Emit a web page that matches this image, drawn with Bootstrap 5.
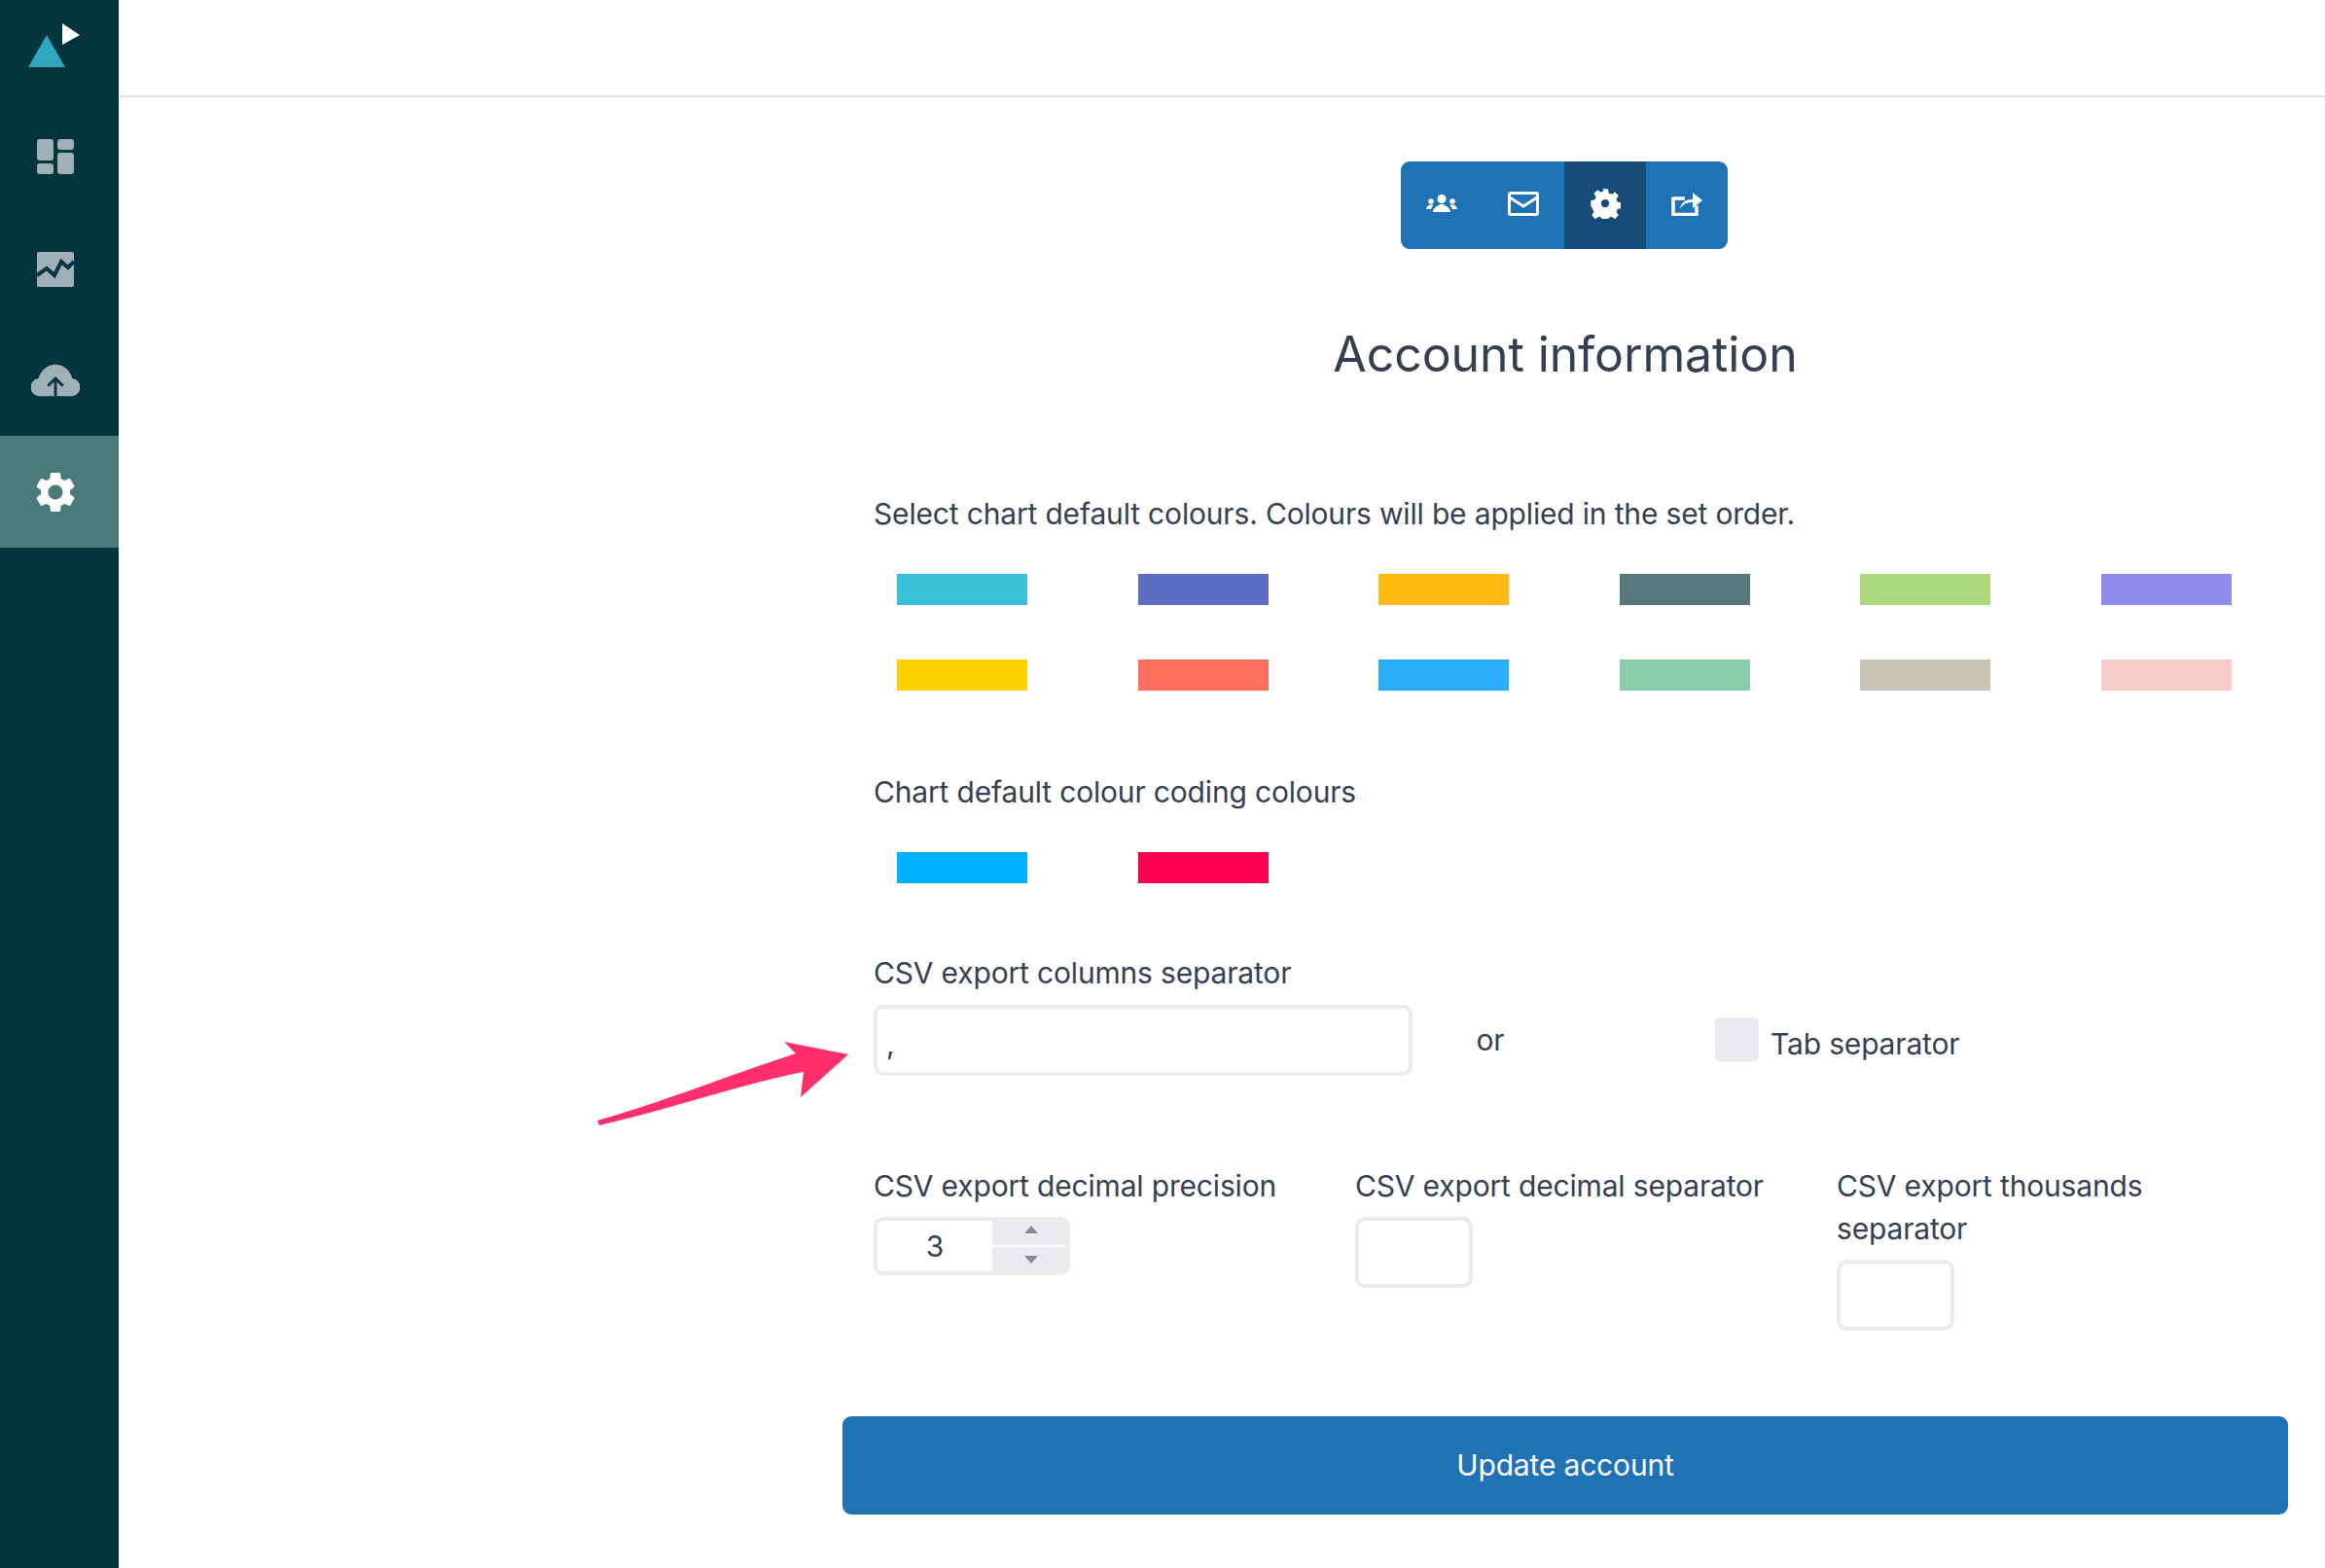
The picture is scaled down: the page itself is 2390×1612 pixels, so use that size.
<!DOCTYPE html>
<html lang="en"><head><meta charset="utf-8"><title>Account information</title>
<link href="https://cdn.jsdelivr.net/npm/bootstrap@5.3.0/dist/css/bootstrap.min.css" rel="stylesheet">
<style>
html,body{height:100%}
body{font-family:Inter,"Liberation Sans",sans-serif;color:#343f52;font-size:30px;background:#fff;letter-spacing:-.17px}
.app-shell{height:1612px;overflow:hidden;position:relative}
.side-rail{width:122px;flex:none;background:linear-gradient(180deg,#04353f,#04343d)}
.rail-logo{height:102px}
.rail-item{height:114px;padding-right:8px}
.rail-first{height:118px}
.rail-item.on{background:#4a7a7a;height:115px}
.top-strip{height:100px;border-bottom:2px solid #e4e6e6}
.form-wrap{width:1486px;margin-left:744px}
.tab-bar{margin-top:66px;width:336px;height:90px;border-radius:9px;overflow:hidden;background:#1f72b6;position:relative;left:-1px}
.tab-item{width:84px;padding-bottom:4px}
.tab-item.on{background:#174b78}
.page-title{font-size:50px;font-weight:400;line-height:60px;margin:78px 0 0;letter-spacing:-.1px}
.field-zone{padding-left:32px;padding-right:0}
.field-cap{line-height:44px;margin:0;display:block}
.cap-first{margin-top:112px}
.sw-grid{display:grid;grid-template-columns:repeat(6,134px);justify-content:space-between;width:1372px;margin-left:24px;margin-top:40px;row-gap:56px}
.sw-box{display:block;height:32px}
.fld{border:4px solid #ebebeb;border-radius:10px;height:73px;box-shadow:none;color:#343f52;font-size:30px;padding:6px 9px 0}
.fld-mini{width:121px}
.spin-box{width:202px;height:60px;border:4px solid #ebebeb;border-radius:10px;overflow:hidden}
.spin-val{width:118px;text-align:center;line-height:52px}
.spin-btns{flex:1;margin-right:-4px;margin-top:-4px;margin-bottom:-4px;gap:2px}
.spin-btns>span{flex:1;background:#e9ebee;padding-bottom:3px}
.tab-check{width:45px;height:45px;border-radius:5px;background:#e9ebee;margin-right:12px;margin-top:-2px}
.tab-txt{position:relative;top:4px}
.or-word{width:160px}
.tab-wrap{margin-left:151px}
.cap-gap{margin-bottom:10px}
.save-btn{background:#1f72b6;border:0;border-radius:9px;height:101px;font-size:30px;width:100%;color:#fff;letter-spacing:-.17px}
.save-btn:hover{background:#1f72b6;color:#fff}
.pink-arrow{position:absolute;left:610px;top:1062px}
</style></head><body>
<div class="app-shell d-flex">
<nav class="side-rail d-flex flex-column">
 <div class="rail-logo"><svg width="122" height="102" viewBox="0 0 122 102"><path d="M48 36 L67 69 L29 69Z" fill="#2fa9bd"/><path d="M64 24 L82 36 L64 46Z" fill="#fff"/></svg></div>
 <div class="rail-item rail-first d-flex align-items-center justify-content-center"><svg width="38" height="36" viewBox="0 0 38 36" fill="#9fb1b6"><rect x="0" y="0" width="17" height="22" rx="3"/><rect x="0" y="25" width="17" height="11" rx="3"/><rect x="21" y="0" width="17" height="11" rx="3"/><rect x="21" y="14" width="17" height="22" rx="3"/></svg></div>
 <div class="rail-item d-flex align-items-center justify-content-center"><svg width="38" height="36" viewBox="0 0 38 36"><rect y="0" width="38" height="36" rx="2" fill="#9fb1b6"/><path d="M0 24 L10 17 L18 24 L25 10 L32 16 L38 10" fill="none" stroke="#04353f" stroke-width="4"/></svg></div>
 <div class="rail-item d-flex align-items-center justify-content-center"><svg width="50" height="36" viewBox="0 0 52 36"><path d="M10 35a9.500 9.500 0 0 1-2-19C10 7 18 1 26 1c8 0 16 6 18 15a9.500 9.500 0 0 1-2 19Z" fill="#9fb1b6"/><path d="M26 35V16M18 24l8-8 8 8" fill="none" stroke="#04353f" stroke-width="3"/></svg></div>
 <div class="rail-item on d-flex align-items-center justify-content-center"><svg width="50" height="50" viewBox="0 0 24 24" fill="#fff"><path d="M19.140 12.940c.04-.3.06-.61.06-.94 0-.32-.02-.64-.07-.94l2.030-1.580a.49.490 0 0 0 .12-.61l-1.920-3.320a.488.488 0 0 0-.59-.22l-2.390.96c-.5-.38-1.030-.7-1.620-.94l-.36-2.540a.484.484 0 0 0-.48-.41h-3.840c-.24 0-.43.17-.47.41l-.36 2.540c-.59.24-1.130.57-1.620.94l-2.390-.96c-.22-.08-.47 0-.59.22L2.740 8.870c-.12.21-.08.47.12.61l2.030 1.580c-.05.3-.09.63-.09.94s.02.64.07.94l-2.030 1.580a.49.490 0 0 0-.12.61l1.920 3.320c.12.22.37.29.59.22l2.390-.96c.5.38 1.030.7 1.620.94l.36 2.540c.05.24.24.41.48.41h3.840c.24 0 .44-.17.47-.41l.36-2.540c.59-.24 1.130-.56 1.620-.94l2.390.96c.22.08.47 0 .59-.22l1.920-3.320c.12-.22.07-.47-.12-.61l-2.010-1.580zM12 15.600c-1.980 0-3.600-1.620-3.600-3.600s1.620-3.600 3.600-3.600 3.600 1.620 3.600 3.600-1.620 3.600-3.600 3.600z"/></svg></div>
</nav>
<div class="flex-grow-1">
 <div class="top-strip"></div>
 <div class="form-wrap d-flex flex-column">
  <div class="tab-bar d-flex align-self-center">
   <div class="tab-item d-flex align-items-center justify-content-center"><svg width="32" height="20" viewBox="0 0 32 20" fill="#fff"><circle cx="16" cy="5.500" r="4.500"/><path d="M7 19c0-4 4-6 6-7l1-1h4l1 1c2 1 6 3 6 7Z"/><circle cx="5" cy="8" r="2.800"/><path d="M0 16c0-2 2-4 3.500-4.500h3l1 1c-1.500 1-2 2-2.500 3.500Z"/><circle cx="27" cy="8" r="2.800"/><path d="M32 16c0-2-2-4-3.500-4.500h-3l-1 1c1.500 1 2 2 2.500 3.500Z"/></svg></div>
   <div class="tab-item d-flex align-items-center justify-content-center"><svg width="32" height="25" viewBox="0 0 32 25" fill="none" stroke="#fff" stroke-width="3"><rect x="1.500" y="1.500" width="29" height="22" rx="1.500"/><path d="M2 6l14 9 14-9"/></svg></div>
   <div class="tab-item on d-flex align-items-center justify-content-center"><svg width="32" height="32" viewBox="0 0 32 32" fill="#fff"><path fill-rule="evenodd" d="M13 0h6l1 4.500 3 1.300 4-2.400 4 4-2.400 4 1.300 3 4.500 1v6l-4.500 1-1.300 3 2.400 4-4 4-4-2.400-3 1.300-1 4.500h-6l-1-4.500-3-1.300-4 2.400-4-4 2.400-4-1.300-3L0 19v-6l4.500-1 1.300-3-2.400-4 4-4 4 2.400 3-1.300ZM16 11.500a4.500 4.500 0 1 0 0 9 4.500 4.500 0 0 0 0-9Z" transform="translate(1.300 1.300) scale(.92)"/></svg></div>
   <div class="tab-item d-flex align-items-center justify-content-center"><svg class="share-ic" width="32" height="26" viewBox="0 0 32 26"><path d="M2 8h12M2 6.500v18h24v-9" fill="none" stroke="#fff" stroke-width="3.500"/><path d="M9 19c1-7 6-10 13-10V2l10 8-10 8v-6c-5 0-10 1-13 7Z" fill="#fff"/></svg></div>
  </div>
  <h1 class="page-title text-center">Account information</h1>
  <div class="field-zone">
   <label class="field-cap cap-first">Select chart default colours. Colours will be applied in the set order.</label>
   <div class="sw-grid">
    <span class="sw-box" style="background:#3bc0d9"></span><span class="sw-box" style="background:#5e6dc4"></span><span class="sw-box" style="background:#ffb911"></span><span class="sw-box" style="background:#56787c"></span><span class="sw-box" style="background:#abd77d"></span><span class="sw-box" style="background:#8f8bec"></span>
    <span class="sw-box" style="background:#ffd100"></span><span class="sw-box" style="background:#ff6f5e"></span><span class="sw-box" style="background:#2aaefc"></span><span class="sw-box" style="background:#8acba9"></span><span class="sw-box" style="background:#c8c4b6"></span><span class="sw-box" style="background:#f8cdc9"></span>
   </div>
   <label class="field-cap" style="margin-top:82px">Chart default colour coding colours</label>
   <div class="sw-grid">
    <span class="sw-box" style="background:#00b0ff"></span><span class="sw-box" style="background:#ff0050"></span>
   </div>
   <label class="field-cap" style="margin-top:70px">CSV export columns separator</label>
   <div class="d-flex align-items-center" style="margin-top:11px">
    <input class="form-control fld" style="width:554px" value=",">
    <span class="or-word text-center">or</span>
    <span class="tab-wrap d-flex align-items-center"><span class="tab-check"></span><span class="tab-txt">Tab separator</span></span>
   </div>
   <div class="row g-0" style="margin-top:91px;width:1390px">
    <div style="width:495px">
     <label class="field-cap cap-gap">CSV export decimal precision</label>
     <div class="spin-box d-flex"><span class="spin-val">3</span><span class="spin-btns d-flex flex-column"><span class="d-flex align-items-center justify-content-center"><svg width="14" height="8" viewBox="0 0 14 8"><path d="M7 0l7 8H0Z" fill="#8c8c8c"/></svg></span><span class="d-flex align-items-center justify-content-center"><svg width="14" height="8" viewBox="0 0 14 8"><path d="M7 8l7-8H0Z" fill="#8c8c8c"/></svg></span></span></div>
    </div>
    <div style="width:495px">
     <label class="field-cap cap-gap">CSV export decimal separator</label>
     <input class="form-control fld fld-mini">
    </div>
    <div style="width:400px">
     <label class="field-cap cap-gap">CSV export thousands separator</label>
     <input class="form-control fld fld-mini">
    </div>
   </div>
  </div>
  <button class="btn save-btn" style="margin-top:88px">Update account</button>
 </div>
</div>
<svg class="pink-arrow" width="270" height="110" viewBox="610 1062 270 110"><path d="M614 1152 C690 1130 750 1105 818 1083 L806 1071 L872 1084 L823 1128 L826 1102 C760 1115 690 1140 616 1157 Z" fill="#ff2f6e"/></svg>
</div>
</body></html>
